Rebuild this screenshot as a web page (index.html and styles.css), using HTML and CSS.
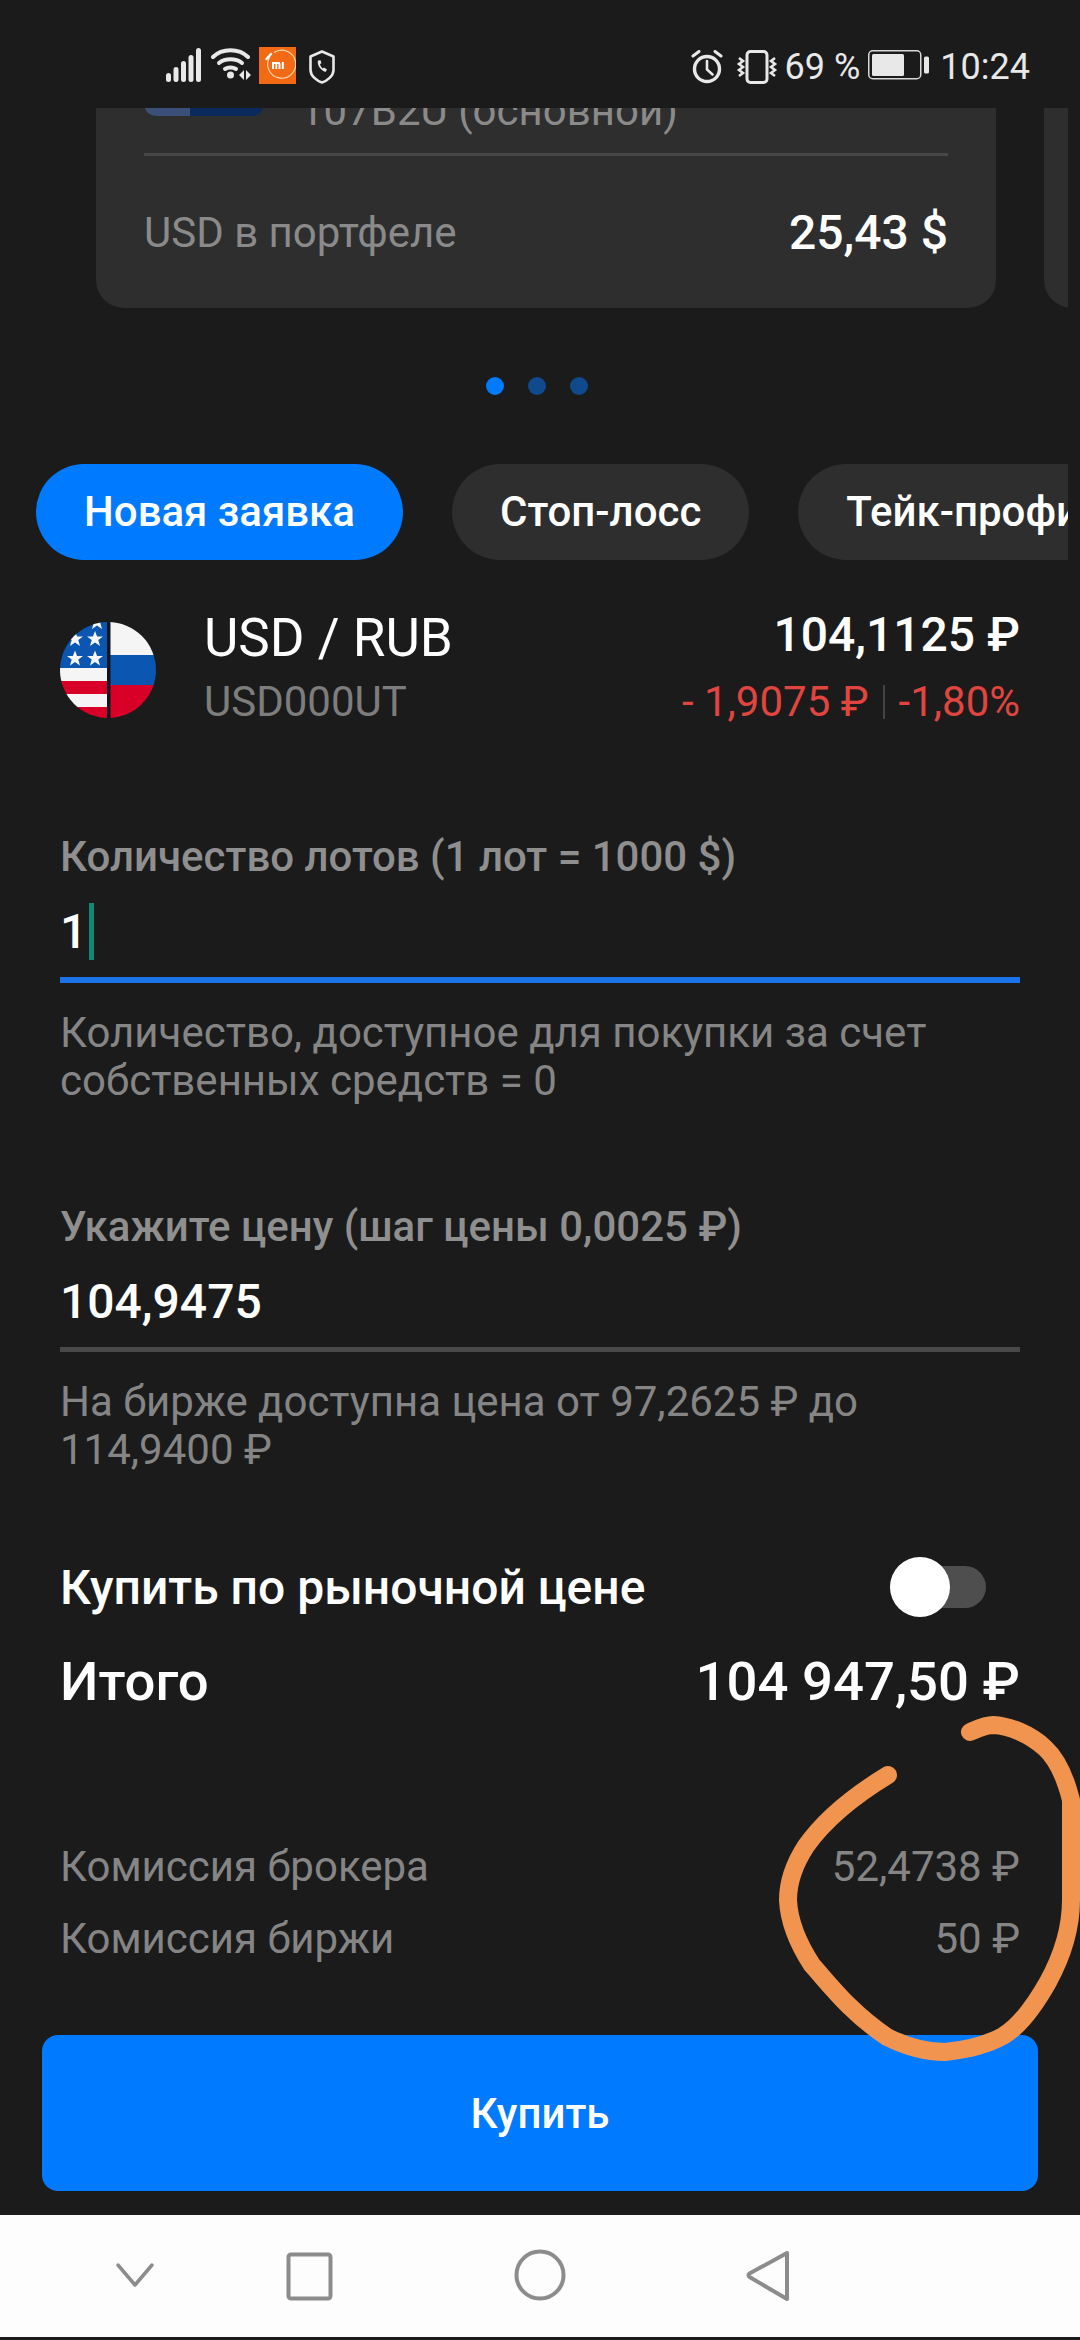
FILE: index.html
```html
<!DOCTYPE html>
<html lang="ru">
<head>
<meta charset="utf-8">
<title>Новая заявка</title>
<link rel="stylesheet" href="styles.css">
</head>
<body>
<div class="screen">
  <header class="status">
    <div class="status-group">
      <svg class="ic" width="35" height="34" viewBox="0 0 35 34"><g fill="#e8e8e8"><rect x="0" y="25" width="5" height="9" rx="2.5"/><rect x="7.5" y="19" width="5" height="15" rx="2.5"/><rect x="15" y="13" width="5" height="21" rx="2.5"/><rect x="22.5" y="7" width="5" height="27" rx="2.5"/><rect x="30" y="0" width="5" height="34" rx="2.5"/></g></svg>
      <svg class="ic" width="40" height="32" viewBox="0 0 40 32"><g fill="none" stroke="#e8e8e8" stroke-width="4" stroke-linecap="round"><path d="M2 9C11 0 28 0 37 9"/><path d="M8 15c6-5 17-5 23 0"/><path d="M14 21c3-2 8-2 11 0"/></g><circle cx="19.500" cy="27" r="3.500" fill="#e8e8e8"/><path d="M28 27l5-5v10zM35 22l5 5-5 5z" fill="#e8e8e8"/></svg>
      <svg class="ic mi" width="37" height="37" viewBox="0 0 37 37"><rect width="37" height="37" fill="#f26a13"/><path d="M11 9.500A14 14 0 1 0 15 5.500" fill="none" stroke="#ffd9b8" stroke-width="1.200"/><path d="M7.500 12L12 7" stroke="#fff" stroke-width="2.500" stroke-linecap="round"/><path d="M13 15h6.500a2 2 0 0 1 2 2v5h-2v-5h-1.300v5h-1.800v-5h-1.400v5h-2zM22.800 15h2v7h-2z" fill="#fff"/></svg>
      <svg class="ic shield" width="26" height="34" viewBox="0 0 26 34"><path d="M13 1.500L24.500 6.500V20C24.500 26 18 31 13 32.500 8 31 1.500 26 1.500 20V6.500z" fill="none" stroke="#e8e8e8" stroke-width="2.600" stroke-linejoin="round"/><path d="M9 10.500c-1 3 1 9 7.500 11.500l1.500-2.500-3-2-1.200 1c-1.500-1-2.500-3-2.800-4.500l1.500-.8-1-3z" fill="#e8e8e8"/></svg>
    </div>
    <div class="status-group status-right">
      <svg class="ic" width="32" height="34" viewBox="0 0 32 34"><g fill="none" stroke="#e8e8e8" stroke-linecap="round"><circle cx="16" cy="19" r="12.500" stroke-width="3.400"/><path d="M16 11v8.500l5.500 5" stroke-width="2.600"/><path d="M2 6l6-4.500M30 6l-6-4.500" stroke-width="3"/></g></svg>
      <svg class="ic vib" width="42" height="34" viewBox="0 0 42 34"><rect x="11" y="1.500" width="20" height="31" rx="3.500" fill="none" stroke="#e8e8e8" stroke-width="3"/><g fill="none" stroke="#e8e8e8" stroke-width="2.600"><path d="M3 8l4 3-4 3 4 3-4 3 4 3-4 3"/><path d="M39 8l-4 3 4 3-4 3 4 3-4 3 4 3"/></g></svg>
      <span class="status-text pct">69 %</span>
      <svg class="ic" width="62" height="30" viewBox="0 0 62 30"><rect x="0.750" y="0.750" width="52" height="28" rx="4" fill="none" stroke="#d8d8d8" stroke-width="1.500"/><rect x="4" y="4" width="32" height="22" rx="1.500" fill="#e8e8e8"/><rect x="56" y="6.500" width="5" height="17" rx="1.500" fill="#e8e8e8"/></svg>
      <span class="status-text time">10:24</span>
    </div>
  </header>

  <section class="carousel">
    <article class="card">
      <div class="account">
        <svg class="account-icon" width="120" height="44" viewBox="0 0 120 44"><path d="M0 0H46V44H14Q0 44 0 30z" fill="#3b5078"/><path d="M46 0H120V30Q120 44 106 44H46z" fill="#0b2a5c"/></svg>
        <span class="account-name">107B2U (основной)</span>
      </div>
      <div class="card-row">
        <span class="card-label">USD в портфеле</span>
        <span class="card-value">25,43 $</span>
      </div>
    </article>
    <div class="card card-next"></div>
  </section>

  <div class="dots">
    <span class="dot dot-on"></span>
    <span class="dot"></span>
    <span class="dot"></span>
  </div>

  <nav class="tabs">
    <span class="tab tab-on">Новая заявка</span>
    <span class="tab">Стоп-лосс</span>
    <span class="tab">Тейк-профит</span>
  </nav>

  <section class="instrument">
    <svg class="flag" width="96" height="96" viewBox="0 0 96 96">
      <defs>
        <clipPath id="round"><circle cx="48" cy="48" r="48"/></clipPath>
        <polygon id="star" points="0,-8 2.100,-2.500 8,-2.500 3.300,1 5,7 0,3.500 -5,7 -3.300,1 -8,-2.500 -2.100,-2.500" fill="#f7f7f7"/>
      </defs>
      <g clip-path="url(#round)">
        <rect width="48" height="46" fill="#0a56b0"/>
        <rect y="46" width="48" height="13" fill="#f5f5f5"/>
        <rect y="59" width="48" height="13" fill="#d80027"/>
        <rect y="72" width="48" height="13" fill="#f5f5f5"/>
        <rect y="85" width="48" height="11" fill="#d80027"/>
        <rect x="48" width="48" height="33" fill="#f5f5f5"/>
        <rect x="48" y="33" width="48" height="30" fill="#0a56b0"/>
        <rect x="48" y="63" width="48" height="33" fill="#d80027"/>
        <rect x="47" width="3.500" height="96" fill="#12141f"/>
        <use href="#star" x="15" y="17"/>
        <use href="#star" x="35" y="17"/>
        <use href="#star" x="15" y="36.500"/>
        <use href="#star" x="35" y="36.500"/>
        <use href="#star" x="37" y="0"/>
      </g>
    </svg>
    <div class="instrument-name">
      <div class="pair">USD / RUB</div>
      <div class="ticker">USD000UT</div>
    </div>
    <div class="instrument-price">
      <div class="price">104,1125 ₽</div>
      <div class="change"><span>- 1,9075 ₽</span><i class="sep"></i><span>-1,80%</span></div>
    </div>
  </section>

  <section class="field field-lots">
    <div class="field-label">Количество лотов (1 лот = 1000 $)</div>
    <div class="field-value"><span>1</span><i class="caret"></i></div>
    <div class="rule rule-active"></div>
    <p class="hint">Количество, доступное для покупки за счет<br>собственных средств = 0</p>
  </section>

  <section class="field field-price">
    <div class="field-label">Укажите цену (шаг цены 0,0025 ₽)</div>
    <div class="field-value"><span>104,9475</span></div>
    <div class="rule"></div>
    <p class="hint">На бирже доступна цена от 97,2625 ₽ до<br>114,9400 ₽</p>
  </section>

  <div class="market">
    <span>Купить по рыночной цене</span>
    <span class="toggle"><i class="thumb"></i></span>
  </div>

  <div class="total">
    <span>Итого</span>
    <span>104 947,50 ₽</span>
  </div>

  <div class="fees">
    <div class="fee"><span>Комиссия брокера</span><span>52,4738 ₽</span></div>
    <div class="fee"><span>Комиссия биржи</span><span>50 ₽</span></div>
  </div>

  <button class="buy">Купить</button>

  <svg class="sysnav" width="1080" height="122" viewBox="0 0 1080 122">
    <g fill="none" stroke="#8c8c8c" stroke-linejoin="round" stroke-linecap="round">
      <path d="M118 50L135 70 152 50" stroke-width="3.500"/>
      <rect x="288.500" y="39.500" width="42" height="44" rx="2.500" stroke-width="4"/>
      <circle cx="540" cy="60" r="23.500" stroke-width="4"/>
      <path d="M787 38V84L749.500 62a2 2 0 0 1 0-3.500z" stroke-width="4"/>
    </g>
  </svg>

  <svg class="scribble" width="1080" height="2340" viewBox="0 0 1080 2340">
    <path d="M888 1775C860 1792 828 1815 806 1846 793 1866 788 1882 788 1900 789 1922 797 1942 812 1965 830 1985 850 2012 887 2037 905 2046 925 2052 945 2052 965 2050 985 2046 1003 2036 1020 2026 1035 2005 1048 1982 1060 1960 1071 1930 1071 1900V1800C1066 1780 1058 1760 1045 1748 1030 1734 1010 1726 993 1725 985 1725 975 1730 970 1732" fill="none" stroke="#f1944f" stroke-width="18" stroke-linecap="round" stroke-linejoin="round"/>
  </svg>
</div>
</body>
</html>
```

FILE: styles.css
```css
* { box-sizing: border-box; }
html, body { margin: 0; padding: 0; background: #1b1b1b; }
.screen {
  position: relative;
  width: 1080px;
  height: 2340px;
  display: flex;
  flex-direction: column;
  overflow: hidden;
  background: #1b1b1b;
  color: #fff;
  font-family: Roboto, "Noto Sans", sans-serif;
}

/* status bar */
.status {
  height: 108px;
  flex: none;
  display: flex;
  justify-content: space-between;
  align-items: flex-start;
  padding: 48px 50px 0 166px;
}
.status-group { display: flex; align-items: flex-start; gap: 10px; }
.status-right { gap: 0; margin-top: 2px; }
.ic { display: block; flex: none; }
.mi { margin: -1px 3px 0 -2px; }
.shield { margin: 2px 0 0 0; }
.vib { margin-left: 13px; }
.status-text { font-size: 36px; line-height: 36px; color: #e8e8e8; }
.pct { margin: -1px 8px 0 7px; }
.time { margin: -1px 0 0 10px; }

/* carousel */
.carousel {
  height: 200px;
  flex: none;
  width: 1068px;
  display: flex;
  gap: 48px;
  padding-left: 96px;
  overflow: hidden;
}
.card {
  flex: none;
  width: 900px;
  height: 200px;
  padding: 0 48px;
  background: #2e2e2e;
  border-radius: 0 0 28px 28px;
  display: flex;
  flex-direction: column;
  justify-content: flex-end;
}
.card-next { padding: 0; }
.account {
  flex: none;
  height: 48px;
  display: flex;
  align-items: flex-end;
  position: relative;
  border-bottom: 3px solid #474747;
  overflow: hidden;
}
.account-icon { position: absolute; left: 0; top: -36px; }
.account-name {
  position: absolute;
  left: 156px;
  top: -21px;
  font-size: 42px;
  line-height: 48px;
  color: #8a8a8a;
}
.card-row {
  flex: none;
  height: 152px;
  display: flex;
  justify-content: space-between;
  align-items: center;
}
.card-label { font-size: 42px; color: #8a8a8a; }
.card-value { font-size: 48px; font-weight: 500; color: #fff; }

/* dots */
.dots {
  flex: none;
  margin-top: 69px;
  height: 18px;
  display: flex;
  justify-content: center;
  gap: 24px;
  padding-right: 6px;
}
.dot { width: 18px; height: 18px; border-radius: 50%; background: #0f4a8c; }
.dot-on { background: #007aff; }

/* tabs */
.tabs {
  flex: none;
  margin-top: 69px;
  width: 1068px;
  height: 96px;
  padding-left: 36px;
  display: flex;
  gap: 49px;
  overflow: hidden;
}
.tab {
  flex: none;
  height: 96px;
  padding: 0 48px;
  border-radius: 48px;
  background: #2e2e2e;
  font-size: 42px;
  font-weight: 500;
  line-height: 96px;
  color: #fff;
}
.tab-on { background: #007aff; }

/* instrument */
.instrument {
  flex: none;
  margin-top: 46px;
  height: 128px;
  padding: 0 60px;
  display: flex;
  align-items: center;
}
.flag { flex: none; display: block; }
.instrument-name { margin-left: 48px; flex: 1; }
.pair { font-size: 53px; line-height: 64px; color: #fff; }
.ticker { font-size: 42px; line-height: 64px; color: #7d7d7d; }
.instrument-price { text-align: right; }
.price { font-size: 48px; font-weight: 500; line-height: 64px; color: #fff; }
.change {
  display: flex;
  justify-content: flex-end;
  align-items: center;
  gap: 14px;
  font-size: 42px;
  line-height: 70px;
  color: #e0453f;
}
.sep { width: 2px; height: 34px; background: #444; }

/* fields */
.field { flex: none; padding: 0 60px; }
.field-lots { margin-top: 99px; }
.field-price { margin-top: 98px; }
.field-label { font-size: 42px; font-weight: 500; line-height: 48px; color: #8f8f8f; }
.field-value {
  margin-top: 22px;
  height: 57px;
  display: flex;
  align-items: center;
  font-size: 48px;
  font-weight: 500;
  line-height: 57px;
  color: #fff;
}
.caret { width: 5px; height: 57px; margin-left: 2px; background: #0f8a78; }
.rule { margin-top: 17px; height: 5px; background: #4a4a4a; }
.rule-active { height: 6px; background: #1a73e8; }
.hint {
  margin: 26px 0 0;
  font-size: 42px;
  line-height: 48px;
  color: #858585;
}

/* market toggle and total */
.market {
  flex: none;
  margin-top: 83px;
  height: 60px;
  padding: 0 60px;
  display: flex;
  justify-content: space-between;
  align-items: center;
  font-size: 48px;
  font-weight: 500;
  color: #fff;
}
.toggle {
  position: relative;
  width: 96px;
  height: 42px;
  margin-right: 34px;
  border-radius: 21px;
  background: #4e4e4e;
}
.thumb {
  position: absolute;
  left: 0;
  top: -9px;
  width: 60px;
  height: 60px;
  border-radius: 50%;
  background: #fff;
}
.total {
  flex: none;
  margin-top: 32px;
  height: 64px;
  padding: 0 60px;
  display: flex;
  justify-content: space-between;
  align-items: center;
  font-size: 54.5px;
  font-weight: 500;
  color: #fff;
}

/* fees */
.fees { flex: none; margin-top: 117px; padding: 0 60px; }
.fee {
  height: 72px;
  display: flex;
  justify-content: space-between;
  align-items: center;
  font-size: 42px;
  color: #858585;
}

/* buy button */
.buy {
  flex: none;
  display: block;
  margin: 61px 0 0 42px;
  width: 996px;
  height: 156px;
  border: 0;
  border-radius: 16px;
  background: #007aff;
  color: #fff;
  font-family: inherit;
  font-size: 42px;
  font-weight: 500;
}

/* system navigation */
.sysnav { flex: none; display: block; margin-top: 24px; background: #fdfdfd; }

/* hand drawn annotation over the screenshot */
.scribble { position: absolute; left: 0; top: 0; pointer-events: none; }
```
